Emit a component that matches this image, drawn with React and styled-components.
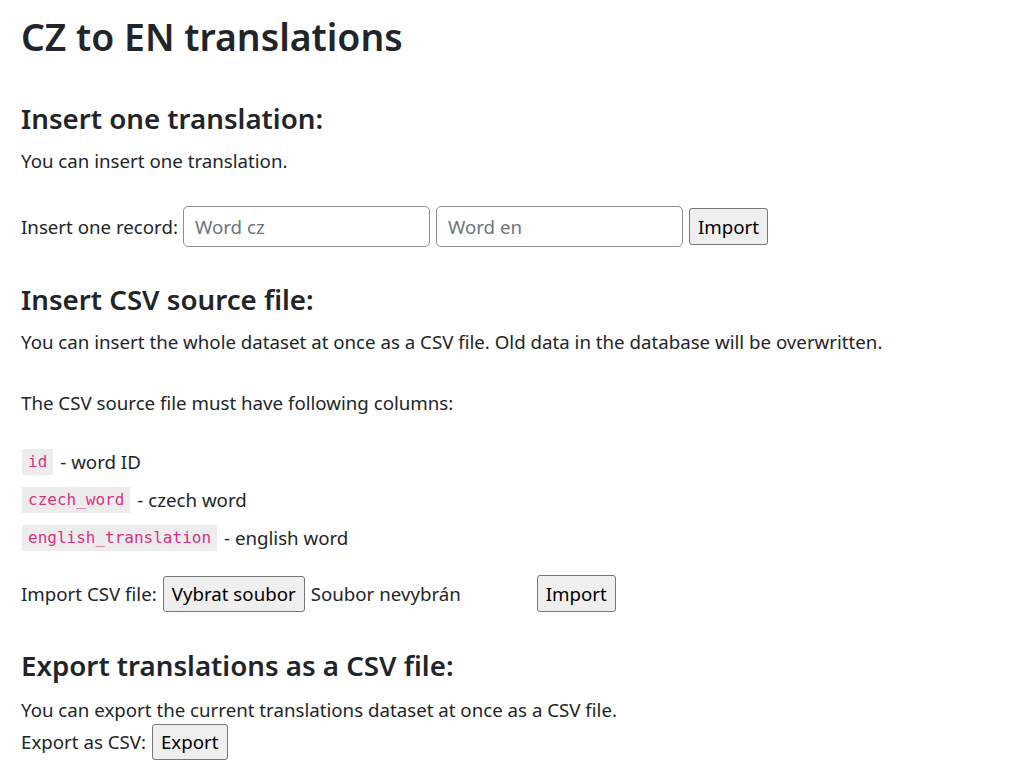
import React from "react";
import styled, { createGlobalStyle } from "styled-components";

const GlobalStyle = createGlobalStyle`
  html, body {
    margin: 0;
    padding: 0;
    background: #ffffff;
  }
  body {
    font-family: "Noto Sans", "Open Sans", sans-serif;
    font-size: 18.7px;
    line-height: 1.5;
    color: #212529;
  }
`;

const Page = styled.div`
  display: flex;
  flex-direction: column;
  align-items: flex-start;
  padding: 0 21px;
`;

const Title = styled.h1`
  margin: 15px 0 0;
  font-size: 37.4px;
  font-weight: 600;
  line-height: 1.2;
`;

const SectionTitle = styled.h2`
  margin: ${(p) => p.$gap}px 0 0;
  font-size: 27.7px;
  font-weight: 600;
  line-height: 1.2;
`;

const Text = styled.p`
  margin: ${(p) => p.$gap}px 0 0;
`;

const Row = styled.div`
  display: flex;
  align-items: center;
  margin-top: ${(p) => p.$gap}px;
  gap: ${(p) => p.$spacing || 5}px;
`;

const Input = styled.input`
  box-sizing: border-box;
  width: 247px;
  height: 41px;
  padding: 0 11px;
  margin-left: ${(p) => p.$ml || 0}px;
  border: 1px solid #8f8f8f;
  border-radius: 5px;
  font-family: inherit;
  font-size: 18.7px;
  color: #212529;
  background: #fff;

  &::placeholder {
    color: #6c757d;
  }
`;

const Button = styled.button`
  box-sizing: border-box;
  height: ${(p) => p.$h || 37}px;
  padding: 0 8px;
  margin-left: ${(p) => p.$ml || 0}px;
  border: 1px solid #767676;
  border-radius: 3px;
  background: #efefef;
  color: #000;
  font-family: inherit;
  font-size: 18.7px;
`;

const FieldRow = styled.div`
  display: flex;
  align-items: center;
  height: 37.75px;
  margin-top: ${(p) => p.$gap || 0}px;
`;

const Code = styled.code`
  margin-left: 1px;
  margin-right: 7px;
  padding: 3px 6px;
  background: #ececec;
  color: #d63384;
  font-family: "DejaVu Sans Mono", "Liberation Mono", monospace;
  font-size: 16px;
  line-height: 20px;
`;

const FilePicker = styled.div`
  display: flex;
  align-items: center;
  gap: 6px;
  width: 368px;
`;

const fields = [
  ["id", "word ID"],
  ["czech_word", "czech word"],
  ["english_translation", "english word"],
];

export default function App() {
  return (
    <>
      <GlobalStyle />
      <Page>
        <Title>CZ to EN translations</Title>

        <SectionTitle $gap={42.4}>Insert one translation:</SectionTitle>
        <Text $gap={11.8}>You can insert one translation.</Text>
        <Row $gap={31}>
          <span>Insert one record:</span>
          <Input placeholder="Word cz" />
          <Input placeholder="Word en" $ml={1} />
          <Button $ml={1}>Import</Button>
        </Row>

        <SectionTitle $gap={35.2}>Insert CSV source file:</SectionTitle>
        <Text $gap={12.3}>
          You can insert the whole dataset at once as a CSV file. Old data in
          the database will be overwritten.
        </Text>
        <Text $gap={32.6}>The CSV source file must have following columns:</Text>
        {fields.map(([code, desc], i) => (
          <FieldRow key={code} $gap={i === 0 ? 26.6 : 0}>
            <Code>{code}</Code>
            <span>- {desc}</span>
          </FieldRow>
        ))}

        <Row $gap={18.7} $spacing={6}>
          <span>Import CSV file:</span>
          <FilePicker>
            <Button $h={36}>Vybrat soubor</Button>
            <span>Soubor nevybrán</span>
          </FilePicker>
          <Button>Import</Button>
        </Row>

        <SectionTitle $gap={36.5}>Export translations as a CSV file:</SectionTitle>
        <Text $gap={13.5}>
          You can export the current translations dataset at once as a CSV file.
        </Text>
        <Row $gap={0} $spacing={6}>
          <span>Export as CSV:</span>
          <Button $h={36}>Export</Button>
        </Row>
      </Page>
    </>
  );
}
